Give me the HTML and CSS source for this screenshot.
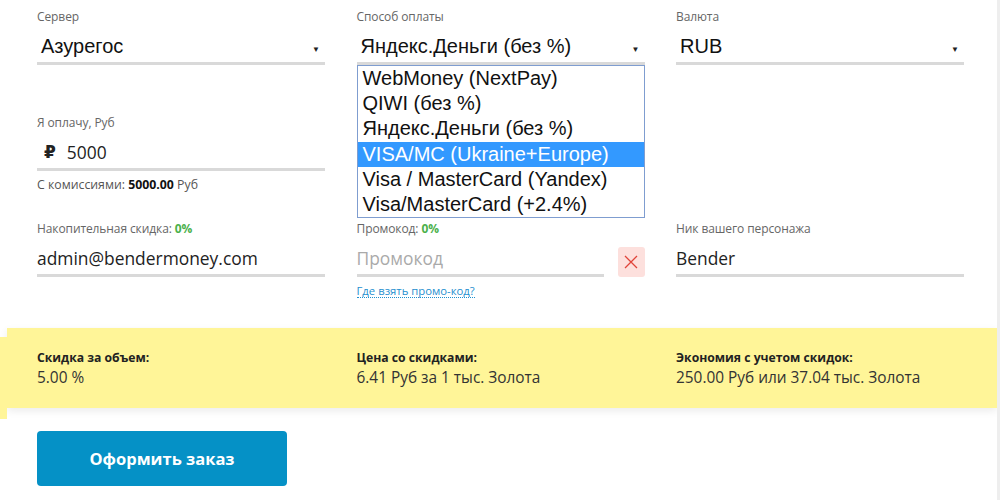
FILE: index.html
```html
<!DOCTYPE html>
<html lang="ru">
<head>
<meta charset="utf-8">
<title>Оформление заказа</title>
<link rel="stylesheet" href="styles.css">
</head>
<body>
<div class="page">
  <div class="grid row1">
    <div class="field">
      <div class="label">Сервер</div>
      <div class="select"><span class="sel-value">Азурегос</span><span class="arrow">▼</span></div>
    </div>
    <div class="field pay">
      <div class="label">Способ оплаты</div>
      <div class="select"><span class="sel-value">Яндекс.Деньги (без %)</span><span class="arrow">▼</span></div>
      <ul class="dropdown">
        <li>WebMoney (NextPay)</li>
        <li>QIWI (без %)</li>
        <li>Яндекс.Деньги (без %)</li>
        <li class="active">VISA/MC (Ukraine+Europe)</li>
        <li>Visa / MasterCard (Yandex)</li>
        <li>Visa/MasterCard (+2.4%)</li>
      </ul>
    </div>
    <div class="field">
      <div class="label">Валюта</div>
      <div class="select"><span class="sel-value">RUB</span><span class="arrow">▼</span></div>
    </div>
  </div>

  <div class="grid row2">
    <div class="field">
      <div class="label">Я оплачу, Руб</div>
      <div class="input money"><span class="rub">₽</span><span>5000</span></div>
      <div class="note">С комиссиями: <b>5000.00</b> Руб</div>
    </div>
  </div>

  <div class="grid row3">
    <div class="field">
      <div class="label">Накопительная скидка: <b class="green">0%</b></div>
      <div class="input">admin@bendermoney.com</div>
    </div>
    <div class="field">
      <div class="label">Промокод: <b class="green">0%</b></div>
      <div class="promo-line">
        <div class="input placeholder">Промокод</div>
        <button class="clear" type="button" aria-label="Очистить">
          <svg width="14" height="14" viewBox="0 0 14 14"><path d="M1 1L13 13M13 1L1 13" stroke="#e0443a" stroke-width="1.3" fill="none"/></svg>
        </button>
      </div>
      <a class="promo-link" href="#">Где взять промо-код?</a>
    </div>
    <div class="field">
      <div class="label">Ник вашего персонажа</div>
      <div class="input">Bender</div>
    </div>
  </div>

  <div class="band">
    <div class="grid band-grid">
      <div><div class="b-title">Скидка за объем:</div><div class="b-val">5.00 %</div></div>
      <div><div class="b-title">Цена со скидками:</div><div class="b-val">6.41 Руб за 1 тыс. Золота</div></div>
      <div><div class="b-title">Экономия с учетом скидок:</div><div class="b-val">250.00 Руб или 37.04 тыс. Золота</div></div>
    </div>
  </div>

  <div class="actions">
    <button class="order" type="button">Оформить заказ</button>
  </div>
</div>
</body>
</html>
```

FILE: styles.css
```css
html { background: #eeeeee; }
body {
  margin: 0;
  font-family: "Open Sans", "Noto Sans", sans-serif;
  color: #222;
}
.page {
  width: 997px;
  min-height: 500px;
  background: #fff;
  overflow: hidden;
}
.grid {
  display: grid;
  grid-template-columns: 288px 288px 288px;
  column-gap: 31.5px;
  padding-left: 37px;
}
.field { position: relative; }
.label {
  font-size: 12px;
  line-height: 14px;
  height: 14px;
  color: #666;
  letter-spacing: -0.1px;
}
.green { color: #4cb14c; font-weight: 700; }

.row1 { padding-top: 10px; }
.select {
  height: 38px;
  border-bottom: 3px solid #d9d9d9;
  display: flex;
  align-items: center;
  justify-content: space-between;
  font-family: "Liberation Sans", Arial, sans-serif;
  font-size: 20px;
  color: #111;
  padding-left: 4px;
  padding-right: 5px;
  box-sizing: content-box;
}
.sel-value { padding-top: 6px; }
.arrow { font-size: 8px; padding-top: 12px; color: #222; }

.dropdown {
  position: absolute;
  left: 0;
  top: 55px;
  width: 286px;
  margin: 0;
  padding: 0;
  list-style: none;
  border: 1px solid #7f9dd0;
  background: #fff;
  font-family: "Liberation Sans", Arial, sans-serif;
  font-size: 20px;
  z-index: 5;
}
.dropdown li {
  height: 25.2px;
  line-height: 25px;
  padding-left: 5px;
  color: #111;
  white-space: nowrap;
}
.dropdown li.active { background: #3399ff; color: #fff; }

.row2 { margin-top: 51px; }
.input {
  border-bottom: 3px solid #d9d9d9;
  display: flex;
  align-items: center;
  font-size: 17.4px;
  color: #222;
  padding-top: 6px;
  box-sizing: border-box;
  height: 41px;
}
.money { padding-left: 7px; }
.rub { font-size: 17px; margin-right: 11px; font-family: "DejaVu Sans", sans-serif; font-weight: 700; }
.note {
  margin-top: 7px;
  font-size: 12.3px;
  line-height: 14px;
  color: #555;
}
.note b { color: #111; }

.row3 { margin-top: 30px; }
.promo-line { display: flex; align-items: flex-start; }
.promo-line .input { width: 247px; flex: none; }
.placeholder { color: #aaa; }
.clear {
  margin-left: 14px;
  margin-top: 11px;
  width: 30px;
  height: 30px;
  border: none;
  border-radius: 3px;
  background: #fde0dd;
  padding: 0;
  display: flex;
  align-items: center;
  justify-content: center;
}
.promo-link {
  display: inline-block;
  margin-top: 7px;
  font-size: 11.3px;
  line-height: 13px;
  color: #1f8fcf;
  text-decoration: none;
  border-bottom: 1px dotted #1f8fcf;
}

.band {
  position: relative;
  margin: 28px 0 0 7px;
  height: 80px;
  background: #fff598;
  box-shadow: 0 3px 8px rgba(0,0,0,0.08);
}
.band::before {
  content: "";
  position: absolute;
  left: -7px;
  top: 9px;
  width: 7px;
  height: 82px;
  background: #fff598;
}
.band-grid { padding-left: 30px; padding-top: 22px; }
.b-title { font-size: 12.2px; font-weight: 700; line-height: 16px; color: #222; }
.b-val { font-size: 15.4px; line-height: 20px; margin-top: 2px; color: #333; }

.actions { padding: 23px 0 0 37px; }
.order {
  width: 250px;
  height: 55px;
  border: none;
  border-radius: 4px;
  background: #0591c6;
  color: #fff;
  font-family: "Open Sans", "Noto Sans", sans-serif;
  font-weight: 700;
  font-size: 16.5px;
}
```
